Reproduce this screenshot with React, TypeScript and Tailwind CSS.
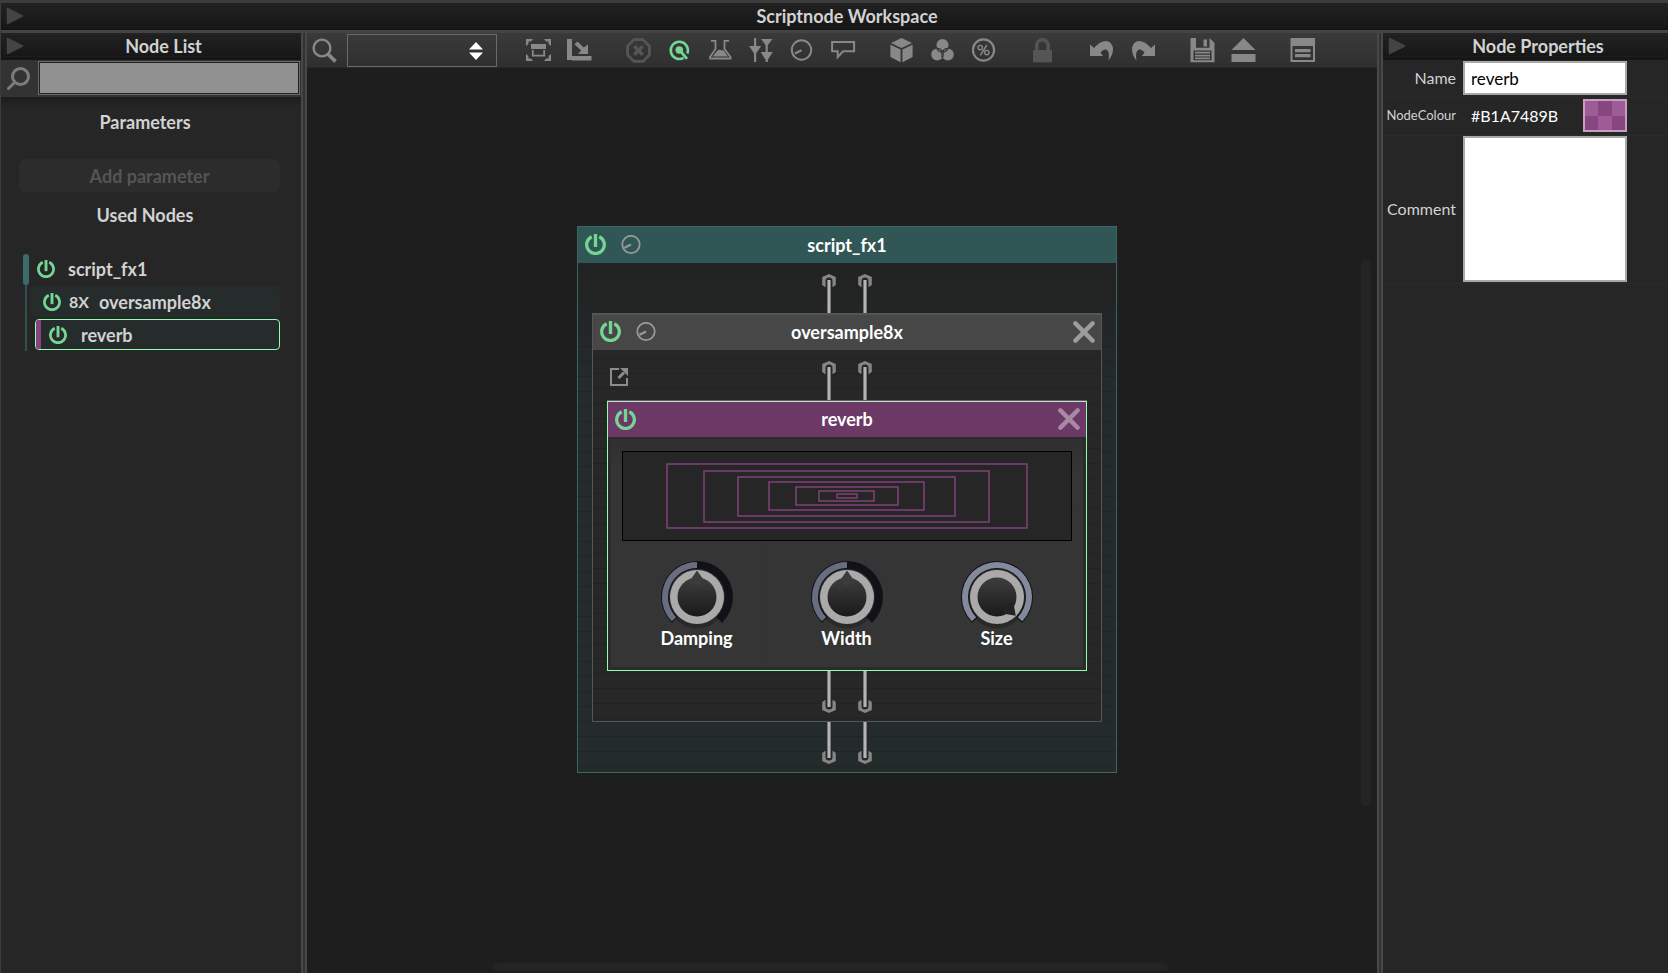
import type { ReactNode } from "react";

const GREEN = "#75d595";

function PowerIcon({ size = 20 }: { size?: number }) {
  return (
    <svg width={size} height={size} viewBox="0 0 20 20" fill="none" stroke={GREEN}>
      <path d="M6.4 2.6A8.4 8.4 0 1 0 13.6 2.6" strokeWidth="3.1" />
      <path d="M10 0V12.4" strokeWidth="3.2" />
    </svg>
  );
}

function MiniKnobIcon() {
  return (
    <svg width="20" height="20" viewBox="0 0 20 20" fill="none" stroke="#959a9a">
      <circle cx="10" cy="9.5" r="8.7" strokeWidth="1.8" />
      <path d="M3.5 12.8L10 9.5" strokeWidth="2.2" />
    </svg>
  );
}

function CloseIcon({ color }: { color: string }) {
  return (
    <svg width="22" height="22" viewBox="0 0 22 22" stroke={color} strokeWidth="4.4" strokeLinecap="round">
      <path d="M2.4 2.4L19.6 19.6M19.6 2.4L2.4 19.6" />
    </svg>
  );
}

function PanelHeader({ title }: { title: string }) {
  return (
    <header className="flex h-[27px] shrink-0 items-center bg-linear-to-b from-[#222222] to-[#151515] pb-0.5 outline-1 -outline-offset-4 outline-[#1d1d1d]">
      <button aria-label={`Fold ${title}`} className="ml-[5px] w-5">
        <svg width="18" height="18" viewBox="0 0 18 18">
          <path d="M1.5 1.5L16.500 9L1.500 16.500z" fill="#444" stroke="#444" strokeWidth="1.5" strokeLinejoin="round" />
        </svg>
      </button>
      <h2 className="flex-1 text-center text-lg leading-6 font-bold text-[#d2d2d2]">{title}</h2>
    </header>
  );
}

function Splitter() {
  return <div className="w-1.5 shrink-0 border-x-2 border-[#484848] bg-[#333]" />;
}

function ToolButton({ label, children, dim = false }: { label: string; children: ReactNode; dim?: boolean }) {
  return (
    <button aria-label={label} className={dim ? "text-[#555]" : "text-[#888]"}>
      <svg width="25" height="25" viewBox="0 0 25 25" fill="currentColor">
        {children}
      </svg>
    </button>
  );
}

function ToolGroup({ children }: { children: ReactNode }) {
  return <div className="flex items-center gap-4">{children}</div>;
}

function Toolbar() {
  const line = { fill: "none", stroke: "currentColor" };
  return (
    <div role="toolbar" className="flex h-[35px] shrink-0 items-center gap-[34px] overflow-hidden border-b border-[#282828] bg-linear-to-b from-[#3a3a3a] to-[#2f2f2f]">
      <div className="-mr-[5px] flex items-center pl-[5px]">
        <label htmlFor="node-select" aria-label="Search nodes" className="w-[35px]">
          <svg width="25" height="25" viewBox="0 0 25 25" fill="none" stroke="#888">
            <circle cx="10" cy="10" r="8.400" strokeWidth="2.4" />
            <path d="M16 16L23.500 23.500" strokeWidth="3.800" />
          </svg>
        </label>
        <div className="relative">
          <select id="node-select" aria-label="Node" className="block h-[33px] w-[150px] appearance-none border border-[#6a6a6a] bg-transparent outline-none">
            <option value=""></option>
          </select>
          <svg className="pointer-events-none absolute top-2 right-3.5" width="14" height="18" viewBox="0 0 14 18" fill="#fff">
            <path d="M7 0L14 7.5H0zM7 18L14 10.5H0z" />
          </svg>
        </div>
      </div>
      <ToolGroup>
        <ToolButton label="Zoom to fit">
          <path d="M0 1h7l-2 2.400H2.400V6L0 8zM25 1h-7l2 2.400h2.600V6L25 8zM0 23h7l-2-2.400H2.400V18L0 16zM25 23h-7l2-2.400h2.600V18L25 16z" />
          <path d="M5 6h15v5H5z" />
          <path d="M6.800 12v5.600h11.400V12" {...line} strokeWidth="1.800" />
        </ToolButton>
        <ToolButton label="Fold unselected">
          <path d="M0 1h5v21H0zM5 18h19.500v4.500H5z" />
          <path d="M7.500 6.200l3-2.800 6.200 6L21 6.500V16H11l3.200-3.500z" />
        </ToolButton>
      </ToolGroup>
      <ToolGroup>
        <ToolButton label="Deselect all" dim>
          <path d="M8 1.600h9L23.400 8v9L17 23.400H8L1.600 17V8z" {...line} strokeWidth="2.800" />
          <path d="M8.300 8.300l8.400 8.400M16.700 8.300l-8.400 8.400" {...line} strokeWidth="3.400" />
        </ToolButton>
        <ToolButton label="Show compiled">
          <g stroke={GREEN} fill="none">
            <path d="M16.600 19.800A8.600 8.600 0 1 1 20.300 15.500" strokeWidth="2.600" />
            <path d="M13 12.500L20 20.800" strokeWidth="2.800" />
            <circle cx="12.300" cy="12" r="3.800" fill={GREEN} stroke="none" />
          </g>
        </ToolButton>
        <ToolButton label="Signal display">
          <path d="M3 2.800H7.500V11L2 19v1.500h20.500V19L16.500 11V2.800h4.500" {...line} strokeWidth="1.800" />
          <path d="M9.500 12.500l2-1 1.500.8h2.500L20 18.600H4.500z" />
        </ToolButton>
        <ToolButton label="Parameter lines">
          <path d="M5 0h2.200v24H5zM0 8h12.200L6.100 17zM16.600 1h2.200v23h-2.200zM12 1h11.500l-5.800 7.500zM11.600 14h12.200l-6.100 9.500z" />
        </ToolButton>
        <ToolButton label="Show parameters">
          <circle cx="11.500" cy="12" r="9.700" {...line} strokeWidth="2" />
          <path d="M5 15.500l6.500-3.300" {...line} strokeWidth="2.200" />
        </ToolButton>
        <ToolButton label="Comments">
          <path d="M1.100 4h22v9.300H12l-5.300 5.900v-5.900H1.100z" {...line} strokeWidth="2" />
        </ToolButton>
      </ToolGroup>
      <ToolGroup>
        <ToolButton label="Freeze network">
          <path d="M11.500 0L22 5 11.500 10 1 5zM.4 6.700L10.600 11.600V24.300L.4 19zM22.600 6.700L12.400 11.600V24.300L22.600 19z" />
        </ToolButton>
        <ToolButton label="Randomise colours">
          <circle cx="11.500" cy="7" r="6" />
          <circle cx="6.200" cy="16.600" r="6" />
          <circle cx="16.800" cy="16.600" r="6" />
          <g fill="none" stroke="#343434" strokeWidth="1.100">
            <path d="M5.800 10.600a6.300 6.300 0 0 0 11.400 0M5.600 10.300a6.500 6.500 0 0 1 5.900 9.500M17.400 10.300a6.500 6.500 0 0 0-5.900 9.500" />
          </g>
        </ToolButton>
        <ToolButton label="CPU usage">
          <circle cx="11.500" cy="12" r="10.600" {...line} strokeWidth="2.200" />
          <circle cx="8.200" cy="9.600" r="2.200" {...line} strokeWidth="1.400" />
          <circle cx="14.800" cy="14.600" r="2.200" {...line} strokeWidth="1.400" />
          <path d="M14.800 7L8.400 17.300" {...line} strokeWidth="1.500" />
        </ToolButton>
      </ToolGroup>
      <ToolGroup>
        <ToolButton label="Lock" dim>
          <path d="M2 12h19v12.300H2z" />
          <path d="M5.800 13V7.500a5.700 5.700 0 0 1 11.400 0V13" {...line} strokeWidth="3.400" />
        </ToolButton>
      </ToolGroup>
      <ToolGroup>
        <ToolButton label="Undo">
          <path d="M0 6.500L4 10C8 5.500 12 3 16 3c4 0 7 4 7 8 0 5-2.500 9-4.500 11.500 1-6 .3-11-3-11-2 0-4 1.500-5 3l2.500 3.500H0z" />
        </ToolButton>
        <ToolButton label="Redo">
          <path d="M24 6.500L20 10C16 5.500 12 3 8 3c-4 0-7 4-7 8 0 5 2.500 9 4.500 11.500-1-6-.3-11 3-11 2 0 4 1.500 5 3L11 18H24z" />
        </ToolButton>
      </ToolGroup>
      <ToolGroup>
        <ToolButton label="Save">
          <path fillRule="evenodd" d="M.5 0h5.500v9.800h13.500V0l5 4.800v19.500H.5zM3.500 12.500v9.800h18v-9.800z" />
          <path d="M13.500 1.500h3.500v7h-3.500zM5 13.800h15v1.700H5zM5 16.700h15v1.700H5zM5 19.600h15v1.700H5z" />
        </ToolButton>
        <ToolButton label="Export">
          <path d="M12.500 0L24.500 12H.5zM.5 16h24v8H.5z" />
        </ToolButton>
      </ToolGroup>
      <ToolGroup>
        <ToolButton label="Properties">
          <path fillRule="evenodd" d="M.5 0H25v24H.5zM2.500 8v14H23V8z" />
          <path d="M5 11h15.500v3.200H5zM5 16h15.500v3.200H5z" />
        </ToolButton>
      </ToolGroup>
    </div>
  );
}

function NodeList() {
  return (
    <aside className="flex w-[300px] shrink-0 flex-col bg-[#262626]">
      <PanelHeader title="Node List" />
      <div className="flex h-[37px] shrink-0 items-center bg-[#333] pb-px pl-1.5">
        <label htmlFor="node-search" aria-label="Search" className="w-[31px]">
          <svg width="23" height="23" viewBox="0 0 23 23" fill="none" stroke="#7c7c7c" strokeWidth="3">
            <circle cx="13.500" cy="9.500" r="8" />
            <path d="M7.800 15.200L1.500 21.500" strokeLinecap="round" />
          </svg>
        </label>
        <input id="node-search" type="text" className="mr-px h-[34px] min-w-0 flex-1 border border-[#6a6a6a] bg-[#909090] px-2 ring-1 ring-[#222] outline-none ring-inset" />
      </div>
      <div className="flex flex-col bg-linear-to-b from-[#1c1c1c] to-[#262626] to-[10px] pr-3">
        <h3 className="mt-[13px] text-center text-lg leading-6 font-bold text-[#d2d2d2]">Parameters</h3>
        <button className="mt-[25px] mr-[9px] ml-[18px] h-[33px] rounded-md bg-[#2c2c2c] text-center text-lg leading-6 font-bold text-[#555]">
          Add parameter
        </button>
        <h3 className="mt-[11px] text-center text-lg leading-6 font-bold text-[#d2d2d2]">Used Nodes</h3>
        <ul className="mt-[26px] mr-[9px] ml-[22px] text-lg leading-6 font-bold text-[#d2d2d2]">
          <li>
            <div className="flex h-8 items-center">
              <span className="mr-2 h-[31px] w-1.5 rounded-full bg-[#3d6b6b]" />
              <PowerIcon size={18} />
              <span className="ml-[13px]">script_fx1</span>
            </div>
            <ul className="ml-0.5 border-l-2 border-[#315050]">
              <li className="py-px pl-1">
                <div className="flex h-[31px] items-center rounded-sm bg-[#262b2c] pl-3">
                  <PowerIcon size={18} />
                  <span className="ml-2 text-base">8X</span>
                  <span className="ml-2.5">oversample8x</span>
                </div>
              </li>
              <li className="py-px pl-2">
                <div className="flex h-[31px] items-center overflow-hidden rounded border border-[#90ffb1] bg-[#262b2c]">
                  <span className="mr-2 h-full w-[5px] bg-[#884480]" />
                  <PowerIcon size={18} />
                  <span className="ml-[14px]">reverb</span>
                </div>
              </li>
            </ul>
          </li>
        </ul>
      </div>
    </aside>
  );
}

function Cables({ bottom = false }: { bottom?: boolean }) {
  const nutY = bottom ? 35 : 18;
  const from = bottom ? 0 : 17;
  const length = bottom ? 36 : 33;
  return (
    <div className="flex h-[50px] justify-center gap-[22px]">
      {[0, 1].map((channel) => (
        <svg key={channel} width="14" height="50" viewBox="0 0 14 50">
          <g transform={`translate(7 ${nutY}) scale(1 ${bottom ? -1 : 1})`}>
            <path d="M0 -7L6.800 -4V4L4 6H-4L-6.800 4V-4z" fill="#868686" />
            <path d="M-3.500 7V0A3.500 3.500 0 0 1 3.500 0V7z" fill="#262626" />
          </g>
          <rect x="5" y={from} width="4" height={length} fill="#777" />
          <rect x="6" y={from} width="2" height={length} fill="#b4b4b4" />
        </svg>
      ))}
    </div>
  );
}

function point(radius: number, degrees: number) {
  const a = (degrees * Math.PI) / 180;
  return `${(36 + radius * Math.sin(a)).toFixed(2)} ${(36 - radius * Math.cos(a)).toFixed(2)}`;
}

function arc(outer: number, inner: number, from: number, to: number) {
  const large = to - from > 180 ? 1 : 0;
  return `M${point(outer, from)}A${outer} ${outer} 0 ${large} 1 ${point(outer, to)}L${point(inner, to)}A${inner} ${inner} 0 ${large} 0 ${point(inner, from)}z`;
}

function Knob({ label, value }: { label: string; value: number }) {
  const angle = -135 + value * 270;
  const id = `knob-${label.toLowerCase()}`;
  return (
    <div className="flex flex-1 flex-col items-center">
      <div className="relative h-[72px] w-[72px]">
        <svg width="72" height="72" viewBox="0 0 72 72">
          <defs>
            <linearGradient id={`${id}-face`} x1="0" y1="16" x2="0" y2="56" gradientUnits="userSpaceOnUse">
              <stop offset="0" stopColor="#3e3e3e" />
              <stop offset="1" stopColor="#191919" />
            </linearGradient>
          </defs>
          <circle cx="36" cy="39" r="28.500" fill="#292929" />
          <path d={arc(36, 28, -136, 136)} fill="#111217" />
          <path d={arc(35, 29, -134, angle - (value === 1 ? 1 : 0))} fill={value === 1 ? "#838a9d" : "#686e80"} />
          <circle cx="36" cy="36" r="27" fill="#aaaaaa" />
          <circle cx="36" cy="36" r="19.500" fill={`url(#${id}-face)`} />
          <path transform={`rotate(${angle} 36 36)`} d="M36 9.500L30 18L27 19.500L36 25L45 19.500L42 18z" fill={value === 1 ? "#222" : "#3c3c3c"} />
        </svg>
        <input id={id} type="range" min={0} max={1} step={0.01} defaultValue={value} className="absolute inset-0 h-full w-full opacity-0" />
      </div>
      <label htmlFor={id} className="-mt-[7px] text-lg leading-6 font-bold text-white">
        {label}
      </label>
    </div>
  );
}

const rooms = [
  [45, 13, 360, 64],
  [82, 20, 285, 51],
  [116, 26, 217, 39],
  [147, 31, 155, 28],
  [174, 36, 102, 18],
  [197, 40, 55, 10],
  [215, 43, 20, 4],
];

function ReverbNode() {
  return (
    <article className="border-t border-[#884480]">
      <div className="border border-[#90ffb1] bg-[#353535]">
        <header className="flex h-[35px] items-center justify-between bg-[#6c3865] pr-1.5 pb-px pl-[7px]">
          <button aria-label="Bypass reverb" className="w-[22px]">
            <PowerIcon size={21} />
          </button>
          <h3 className="text-lg leading-6 font-bold text-white">reverb</h3>
          <button aria-label="Delete reverb">
            <CloseIcon color="#a689a2" />
          </button>
        </header>
        <div className="border-3 border-t-2 border-[#2c2c2c] bg-linear-to-b from-[#2f2f2f] to-[#353535] to-[30px] px-[11px] pt-3">
          <svg className="w-full border border-black bg-[#262626]" height="90" viewBox="1 1 448 88">
            {rooms.map(([x, y, w, h]) => (
              <rect key={x} x={x} y={y} width={w} height={h} fill="none" stroke="#82427a" strokeWidth="1.500" />
            ))}
          </svg>
          <div className="mt-[20px] flex pb-[17px]">
            <Knob label="Damping" value={0.5} />
            <Knob label="Width" value={0.5} />
            <Knob label="Size" value={1} />
          </div>
        </div>
      </div>
    </article>
  );
}

function OversampleNode() {
  return (
    <article className="border border-[#555] bg-[#272727] bg-[repeating-linear-gradient(to_bottom,transparent_0px,transparent_14px,#222_14px,#222_15px)]">
      <header className="flex h-9 items-center border-t border-[#555] bg-[#474747] pr-1.5 pb-0.5 pl-[7px]">
        <div className="flex flex-1 items-center gap-[14px]">
          <button aria-label="Bypass oversample8x" className="w-[22px]">
            <PowerIcon size={21} />
          </button>
          <button aria-label="Show oversample8x parameters">
            <MiniKnobIcon />
          </button>
        </div>
        <h3 className="text-lg leading-6 font-bold text-white">oversample8x</h3>
        <div className="flex flex-1 justify-end">
          <button aria-label="Delete oversample8x">
            <CloseIcon color="#9c9c9c" />
          </button>
        </div>
      </header>
      <div className="relative px-[14px]">
        <button aria-label="Open in popup" className="absolute top-[18px] left-[17px]">
          <svg width="18" height="18" viewBox="0 0 18 18" fill="none" stroke="#8c8c8c" strokeWidth="2">
            <path d="M9 1H1V17H17V10" />
            <path d="M8.500 10L14 4.500" strokeWidth="3" />
            <path d="M10 0H18V8z" fill="#8c8c8c" stroke="none" />
          </svg>
        </button>
        <Cables />
        <ReverbNode />
        <Cables bottom />
      </div>
    </article>
  );
}

function NodeGraph() {
  return (
    <section aria-label="script_fx1" className="w-[540px] border border-[#3a6666] bg-[#242b2b] bg-[repeating-linear-gradient(to_bottom,transparent_0px,transparent_14px,#212424_14px,#212424_15px)]">
      <header className="flex h-9 items-center bg-[#305655] pr-1.5 pb-px pl-[7px]">
        <div className="flex flex-1 items-center gap-[14px]">
          <button aria-label="Bypass script_fx1" className="w-[22px]">
            <PowerIcon size={21} />
          </button>
          <button aria-label="Show script_fx1 parameters">
            <MiniKnobIcon />
          </button>
        </div>
        <h3 className="text-lg leading-6 font-bold text-white">script_fx1</h3>
        <div className="flex-1" />
      </header>
      <div className="bg-linear-to-b from-[#222222] to-transparent to-[120px] px-[14px]">
        <Cables />
        <OversampleNode />
        <Cables bottom />
      </div>
    </section>
  );
}

function Properties() {
  const field = "border border-[#a8a8a8] ring-1 ring-[#a8a8a8] ring-inset bg-white text-black";
  const row = "grid grid-cols-[73px_164px] items-center gap-x-[7px] border-b border-[#2b2b2b] text-base";
  return (
    <aside className="flex w-[285px] shrink-0 flex-col bg-[#262626]">
      <PanelHeader title="Node Properties" />
      <form className="text-[#d2d2d2]">
        <div className={`${row} h-[38px] pb-px`}>
          <label htmlFor="prop-name" className="text-right">Name</label>
          <input id="prop-name" type="text" defaultValue="reverb" className={`${field} h-[34px] w-full px-[7px] text-[17px] outline-none`} />
        </div>
        <div className={`${row} h-[38px] pb-0.5`}>
          <label htmlFor="prop-colour" className="text-right text-[13px]">NodeColour</label>
          <div className="flex items-center justify-between">
            <input id="prop-colour" type="text" defaultValue="#B1A7489B" className="w-[110px] bg-transparent pl-2 text-white outline-none" />
            <button type="button" aria-label="Pick colour" className="grid h-[33px] w-11 grid-cols-3 border-2 border-[#c49fc0] bg-[#874680]">
              <span className="h-full bg-[#9f5b98]" />
              <span />
              <span className="h-full bg-[#9f5b98]" />
              <span />
              <span className="h-full bg-[#9f5b98]" />
              <span />
            </button>
          </div>
        </div>
        <div className={`${row} h-[148px] pb-px`}>
          <label htmlFor="prop-comment" className="text-right">Comment</label>
          <textarea id="prop-comment" className={`${field} block h-[146px] w-full resize-none p-2 outline-none`} />
        </div>
      </form>
    </aside>
  );
}

export default function App() {
  return (
    <div className="flex h-screen flex-col border-t-3 border-l border-t-[#3c3c3c] border-l-[#3c3c3c] bg-[#262626] font-[Lato,sans-serif]">
      <PanelHeader title="Scriptnode Workspace" />
      <div className="flex min-h-0 flex-1 border-t-3 border-[#444]">
        <NodeList />
        <Splitter />
        <main className="flex min-w-0 flex-1 flex-col bg-[#1e1e1e]">
          <Toolbar />
          <div className="flex min-h-0 flex-1">
            <div className="flex min-w-0 flex-1 items-start justify-center overflow-hidden pt-[158px] pl-[25px]">
              <NodeGraph />
            </div>
            <div className="w-4">
              <div className="mt-[192px] h-[61%] w-2.5 rounded-full bg-[#242424]" />
            </div>
          </div>
          <div className="h-2.5 shrink-0 pr-4">
            <div className="ml-[186px] h-2 w-[64%] rounded-full bg-[#242424]" />
          </div>
        </main>
        <Splitter />
        <Properties />
      </div>
    </div>
  );
}
